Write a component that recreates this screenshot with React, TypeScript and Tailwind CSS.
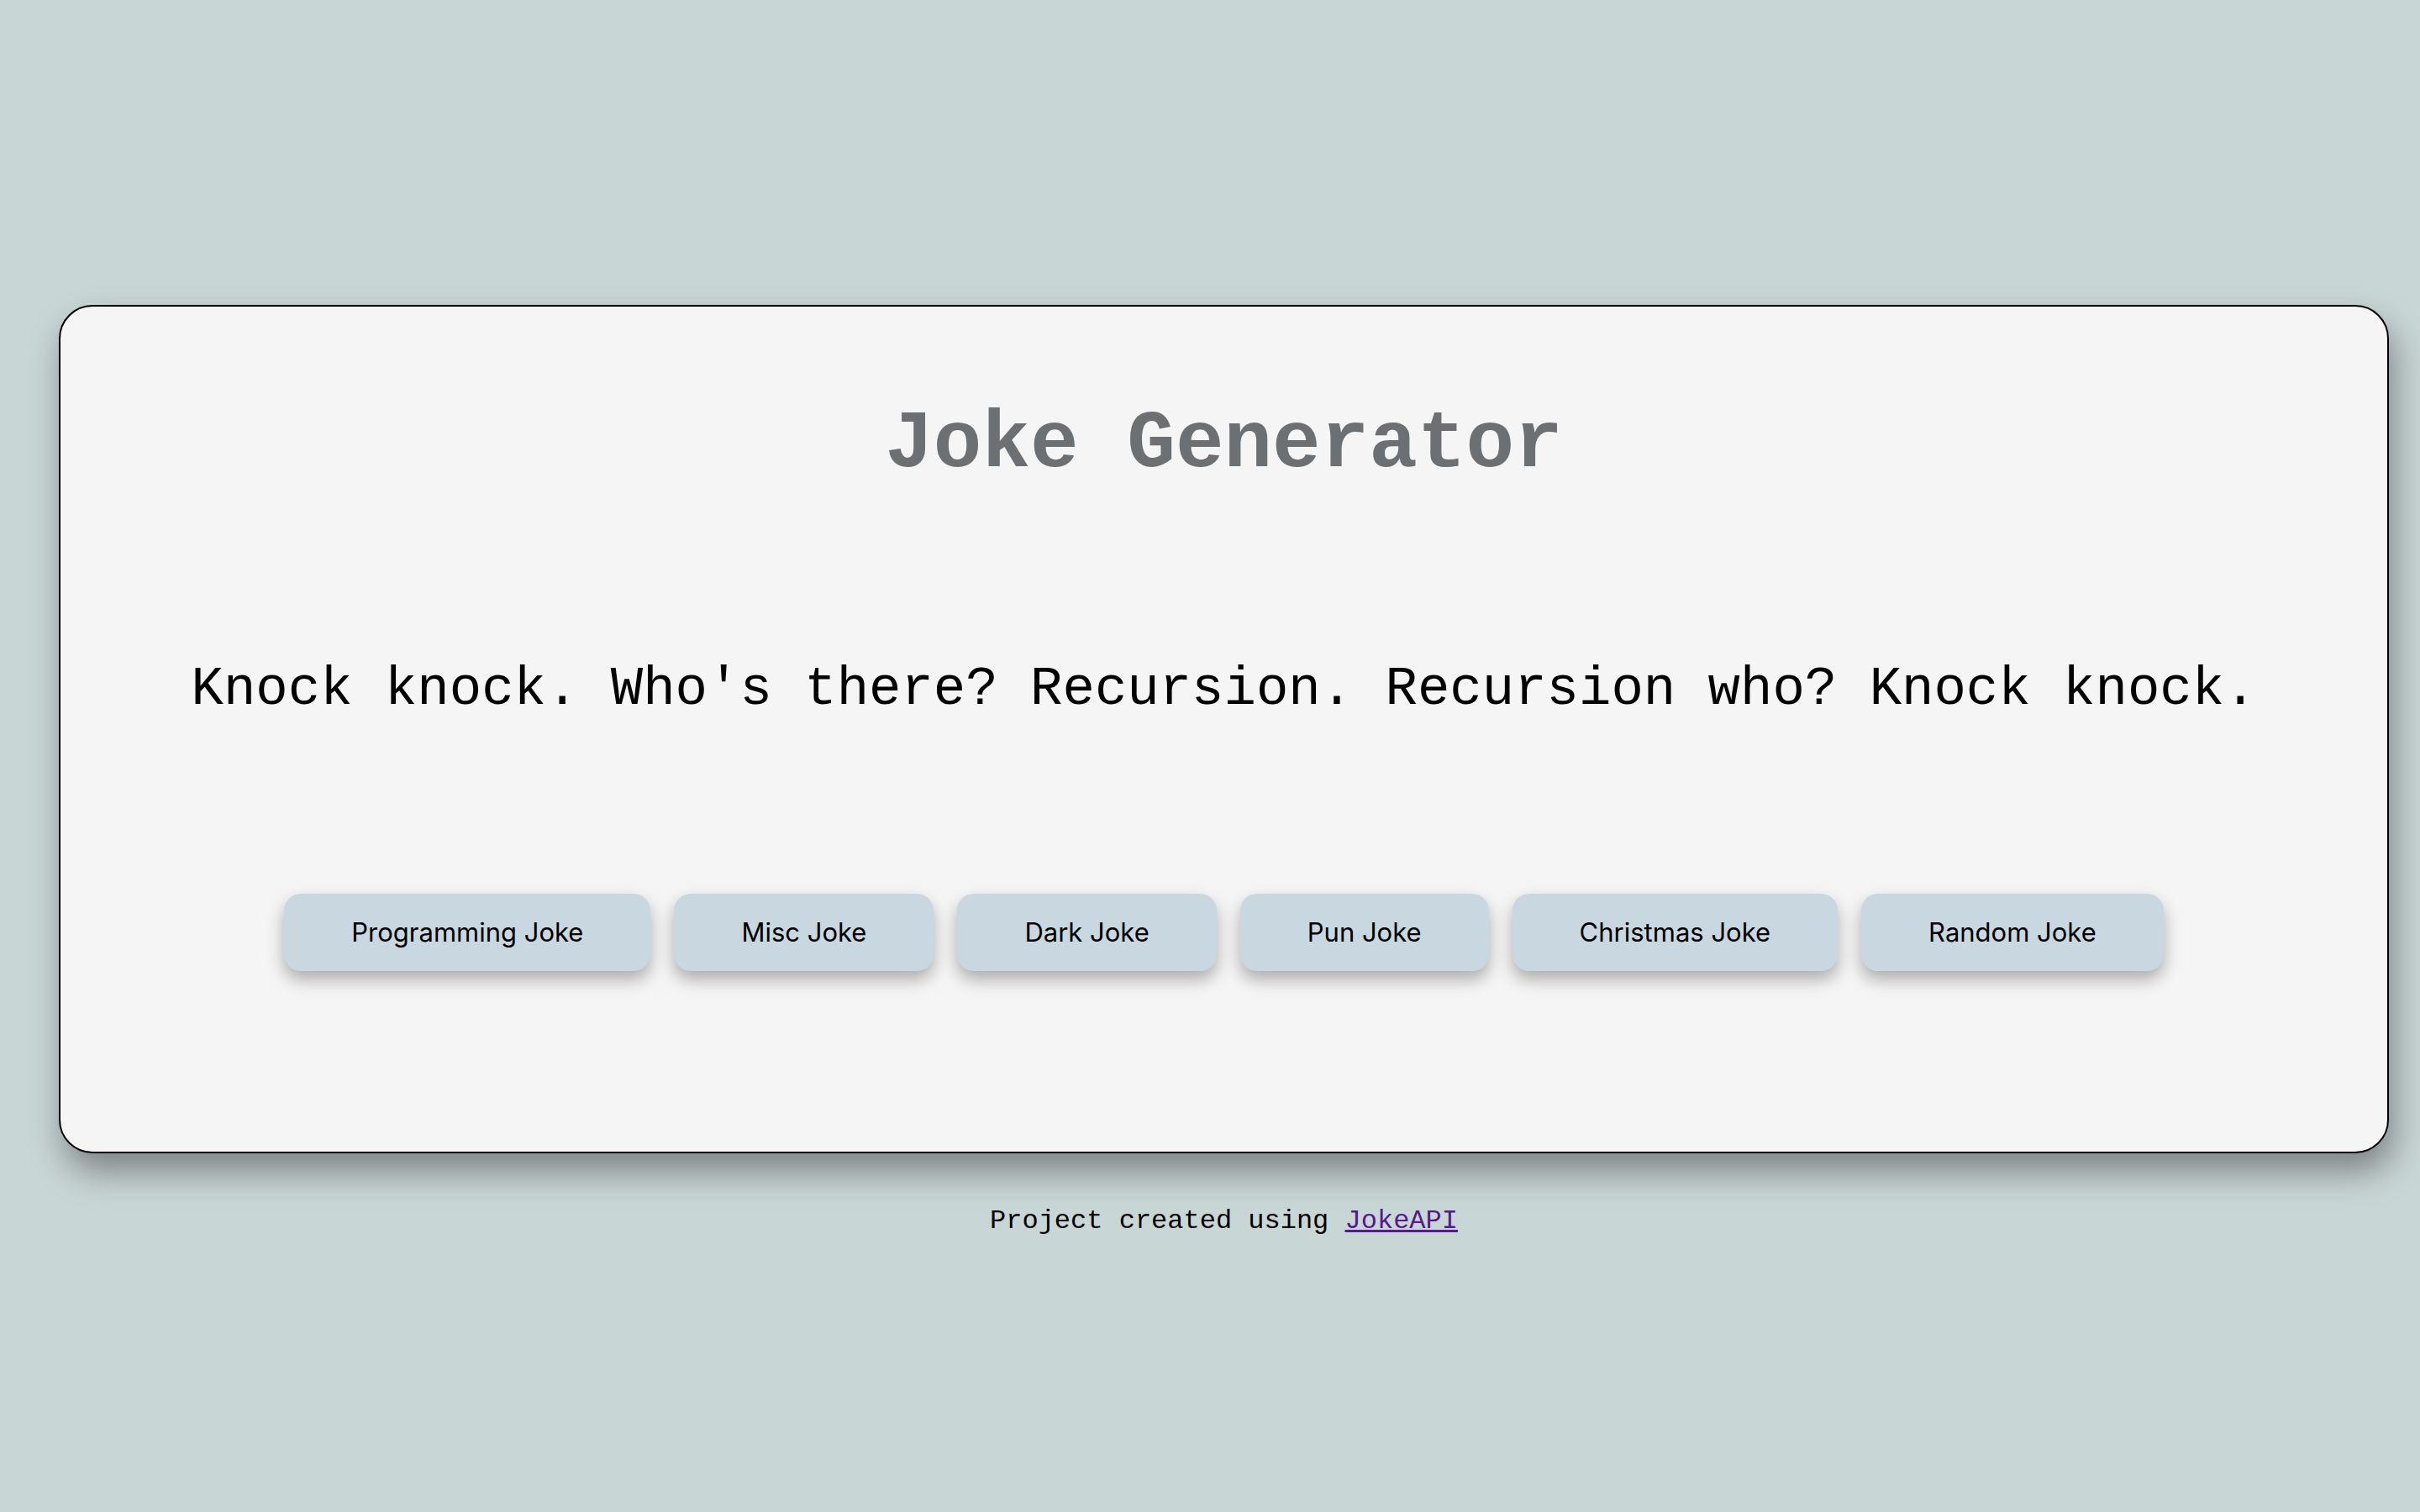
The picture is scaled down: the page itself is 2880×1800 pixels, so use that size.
const jokeTypes = [
  'Programming Joke',
  'Misc Joke',
  'Dark Joke',
  'Pun Joke',
  'Christmas Joke',
  'Random Joke',
];

const App = () => {
  return (
    <div className="min-h-screen w-full bg-[#c9d6d6] pt-[363px] pb-[200px]">
      <div className="ml-[70px] w-[2773px] h-[1010px] rounded-[40px] border-2 border-black bg-[#f5f5f5] shadow-[6px_22px_40px_rgba(0,0,0,0.38)] flex flex-col items-center pt-[110px]">
        <h1 className="font-['Courier_New','Liberation_Mono',monospace] font-bold text-[96px] leading-[110px] text-[#6d7073]">
          Joke Generator
        </h1>
        <p className="mt-[199px] font-['Courier_New','Liberation_Mono',monospace] text-[64px] leading-[74px] text-black">
          Knock knock. Who's there? Recursion. Recursion who? Knock knock.
        </p>
        <div className="mt-[206px] flex gap-[28px]">
          {jokeTypes.map((type) => (
            <button
              key={type}
              className="h-[92px] px-[80px] rounded-[20px] bg-[#c9d7e0] shadow-[0_10px_20px_rgba(0,0,0,0.3)] font-['Inter','Liberation_Sans',sans-serif] text-[31px] text-black"
            >
              {type}
            </button>
          ))}
        </div>
      </div>
      <p className="ml-[70px] w-[2773px] mt-[62px] text-center font-['Courier_New','Liberation_Mono',monospace] text-[32px] leading-[37px] text-black">
        Project created using{' '}
        <a href="#" className="underline text-[#551a8b]">
          JokeAPI
        </a>
      </p>
    </div>
  );
};

export default App;
